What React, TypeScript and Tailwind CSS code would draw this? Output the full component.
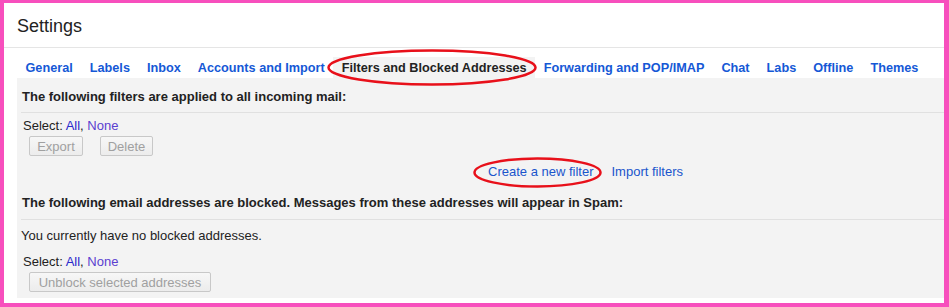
import React from 'react';

/* Gmail settings — Filters and Blocked Addresses tab, with red annotation rings */

const tabs = [
  'General',
  'Labels',
  'Inbox',
  'Accounts and Import',
  'Filters and Blocked Addresses',
  'Forwarding and POP/IMAP',
  'Chat',
  'Labs',
  'Offline',
  'Themes',
];
const ACTIVE = 'Filters and Blocked Addresses';

function DisabledButton({ label, width }: { label: string; width: string }) {
  return (
    <button
      disabled
      className={`${width} h-[20px] rounded-[2px] border border-[#c8c8c8] bg-gradient-to-b from-[#f7f7f7] to-[#ececec] text-[13px] leading-none text-[#a0a0a0]`}
    >
      {label}
    </button>
  );
}

function SelectRow() {
  return (
    <div className="h-[16px] pl-[6px] text-[13px] leading-[16px] text-[#222]">
      Select: <span className="text-[#2a2acc]">All</span>,{' '}
      <span className="text-[#5a3fd0]">None</span>
    </div>
  );
}

export default function App() {
  return (
    <div
      className="relative h-[307px] w-[949px] overflow-hidden border-b-4 border-l-4 border-r-[5px] border-t-[3px] border-[#f74fbd] bg-white"
      style={{ fontFamily: '"Liberation Sans", Arial, sans-serif' }}
    >
      {/* Header */}
      <div className="flex h-[45px] items-center border-b border-[#e5e5e5] pl-[13px] pt-[2px]">
        <h1 className="text-[18px] leading-none text-[#222]">Settings</h1>
      </div>

      {/* Tabs */}
      <div className="ml-[13px] mt-[9px] flex">
        {tabs.map((t) => (
          <div
            key={t}
            className={`flex h-[21px] items-center px-[8.5px] pt-[2px] text-[12.7px] font-bold ${
              t === ACTIVE ? 'bg-[#f3f3f3] text-[#222]' : 'text-[#1558d6]'
            }`}
          >
            {t}
          </div>
        ))}
      </div>

      {/* Content */}
      <div className="ml-[13px] h-[220px] bg-[#f3f3f3] text-[13px] text-[#222]">
        <div className="ml-[4px] flex h-[35px] items-center border-b border-[#e0e0e0] pl-px pt-[3px] font-bold">
          The following filters are applied to all incoming mail:
        </div>

        <div className="mt-[5px]">
          <SelectRow />
        </div>
        <div className="mt-[2px] flex gap-[17px] pl-[12px]">
          <DisabledButton label="Export" width="w-[54px]" />
          <DisabledButton label="Delete" width="w-[53px]" />
        </div>

        <div className="mt-[8px] flex h-[16px] items-center gap-[18px] pl-[471px] leading-[16px] text-[#1a55cc]">
          <span>Create a new filter</span>
          <span>Import filters</span>
        </div>

        <div className="ml-[4px] mt-[6px] flex h-[34px] items-center border-b border-[#e0e0e0] pl-px pt-[1px] font-bold">
          The following email addresses are blocked. Messages from these addresses will appear in Spam:
        </div>

        <div className="mt-[8px] h-[16px] pl-[4px] leading-[16px]">
          You currently have no blocked addresses.
        </div>
        <div className="mt-[10px]">
          <SelectRow />
        </div>
        <div className="mt-[2px] pl-[12px]">
          <DisabledButton label="Unblock selected addresses" width="w-[182px]" />
        </div>
      </div>

      {/* Red annotation rings */}
      <svg
        className="pointer-events-none absolute left-[-4px] top-[-3px]"
        width="949"
        height="307"
        viewBox="0 0 949 307"
      >
        <ellipse cx="432" cy="67.5" rx="103.5" ry="17" fill="none" stroke="#e8101a" strokeWidth="2.5" />
        <ellipse cx="537.5" cy="172.5" rx="63" ry="14" fill="none" stroke="#e8101a" strokeWidth="2.5" />
      </svg>
    </div>
  );
}
